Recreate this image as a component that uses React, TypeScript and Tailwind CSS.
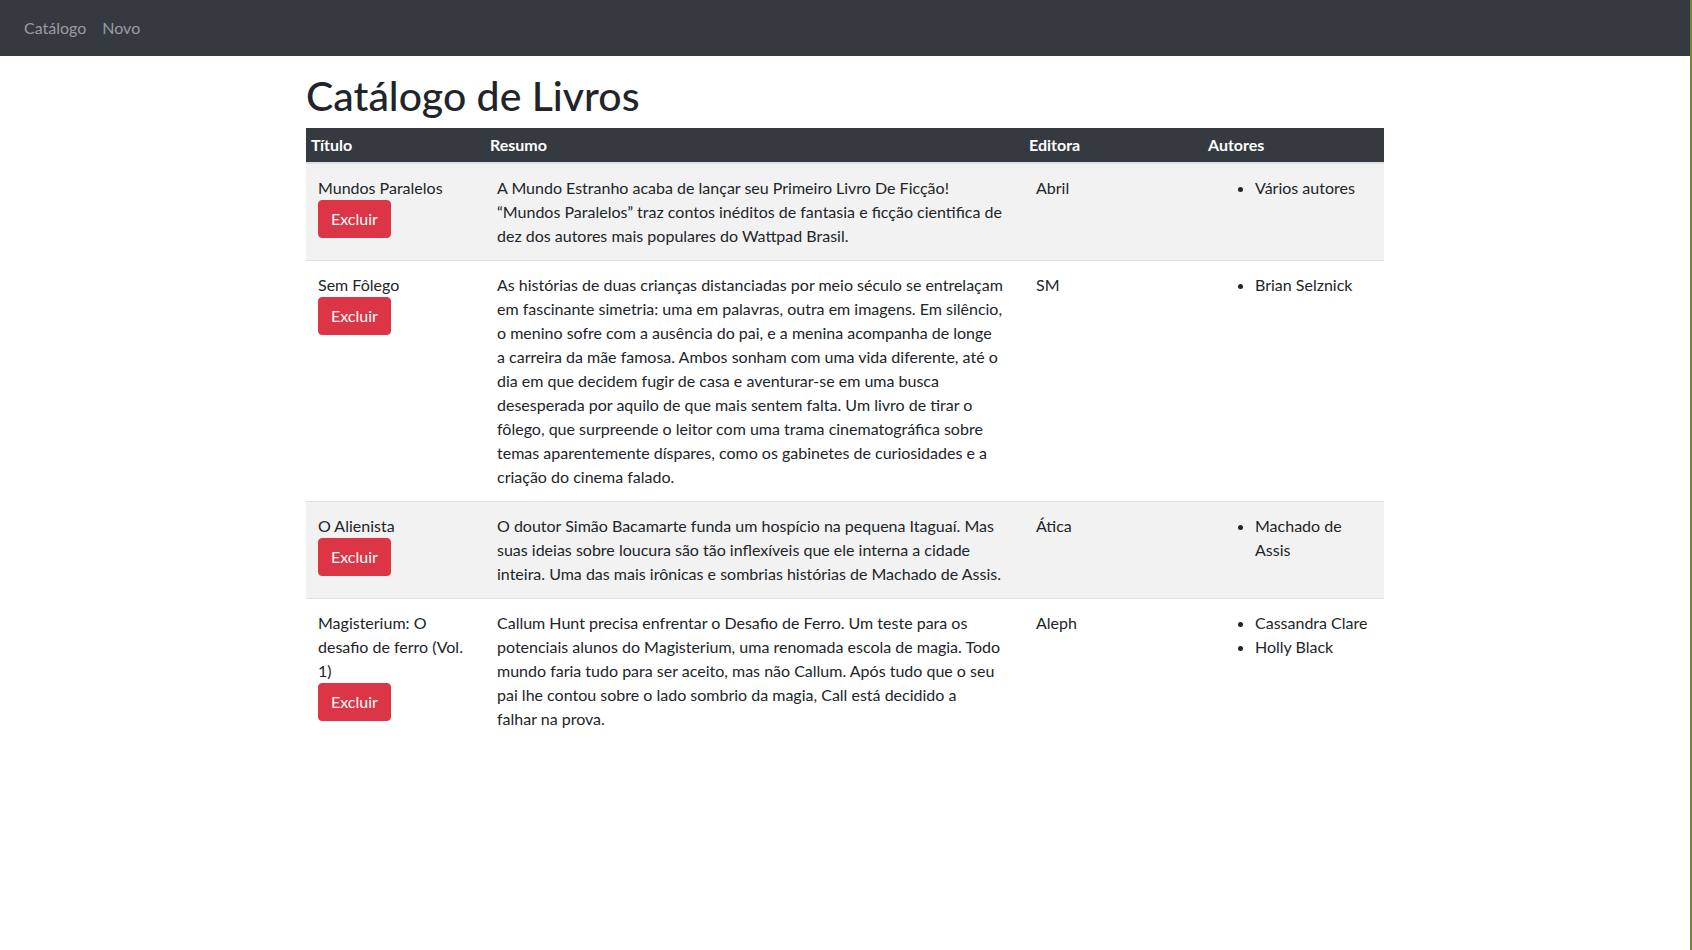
import React from 'react';

type Livro = {
  titulo: string[];
  resumo: string[];
  editora: string;
  autores: string[][];
};

const livros: Livro[] = [
  {
    titulo: ['Mundos Paralelos'],
    resumo: [
      'A Mundo Estranho acaba de lançar seu Primeiro Livro De Ficção!',
      '“Mundos Paralelos” traz contos inéditos de fantasia e ficção cientifica de',
      'dez dos autores mais populares do Wattpad Brasil.',
    ],
    editora: 'Abril',
    autores: [['Vários autores']],
  },
  {
    titulo: ['Sem Fôlego'],
    resumo: [
      'As histórias de duas crianças distanciadas por meio século se entrelaçam',
      'em fascinante simetria: uma em palavras, outra em imagens. Em silêncio,',
      'o menino sofre com a ausência do pai, e a menina acompanha de longe',
      'a carreira da mãe famosa. Ambos sonham com uma vida diferente, até o',
      'dia em que decidem fugir de casa e aventurar-se em uma busca',
      'desesperada por aquilo de que mais sentem falta. Um livro de tirar o',
      'fôlego, que surpreende o leitor com uma trama cinematográfica sobre',
      'temas aparentemente díspares, como os gabinetes de curiosidades e a',
      'criação do cinema falado.',
    ],
    editora: 'SM',
    autores: [['Brian Selznick']],
  },
  {
    titulo: ['O Alienista'],
    resumo: [
      'O doutor Simão Bacamarte funda um hospício na pequena Itaguaí. Mas',
      'suas ideias sobre loucura são tão inflexíveis que ele interna a cidade',
      'inteira. Uma das mais irônicas e sombrias histórias de Machado de Assis.',
    ],
    editora: 'Ática',
    autores: [['Machado de', 'Assis']],
  },
  {
    titulo: ['Magisterium: O', 'desafio de ferro (Vol.', '1)'],
    resumo: [
      'Callum Hunt precisa enfrentar o Desafio de Ferro. Um teste para os',
      'potenciais alunos do Magisterium, uma renomada escola de magia. Todo',
      'mundo faria tudo para ser aceito, mas não Callum. Após tudo que o seu',
      'pai lhe contou sobre o lado sombrio da magia, Call está decidido a',
      'falhar na prova.',
    ],
    editora: 'Aleph',
    autores: [['Cassandra Clare'], ['Holly Black']],
  },
];

// keeps the line breaks of the original layout
const Lines = ({ lines }: { lines: string[] }) => (
  <>
    {lines.map((l, i) => (
      <span key={i} className="block whitespace-nowrap">
        {l}
      </span>
    ))}
  </>
);

export default function App() {
  return (
    <div className="flex min-h-[950px] w-full bg-white font-['Lato','Noto_Sans',sans-serif] text-[16px] leading-6 text-[#212529]">
      <div className="flex-1">
        {/* Navbar */}
        <nav className="flex h-14 items-center bg-[#343a40] px-4">
          <a href="#" className="px-2 text-[#9a9da0]">Catálogo</a>
          <a href="#" className="px-2 text-[#9a9da0]">Novo</a>
        </nav>

        <div className="mx-auto w-[1078px] pt-4">
          <h1 className="mb-2 text-[41px] font-medium leading-[48px]">Catálogo de Livros</h1>

          <table className="w-full table-fixed border-collapse">
            <colgroup>
              <col className="w-[179px]" />
              <col className="w-[539px]" />
              <col className="w-[179px]" />
              <col className="w-[181px]" />
            </colgroup>
            <thead>
              <tr className="border-b-2 border-[#dee2e6] bg-[#343a40] text-left text-white">
                <th className="px-[5px] py-[5px] font-bold">Título</th>
                <th className="px-[5px] py-[5px] font-bold">Resumo</th>
                <th className="px-[5px] py-[5px] font-bold">Editora</th>
                <th className="px-[5px] py-[5px] font-bold">Autores</th>
              </tr>
            </thead>
            <tbody>
              {livros.map((livro, i) => (
                <tr
                  key={i}
                  className={`border-t border-[#dee2e6] align-top ${i % 2 === 0 ? 'bg-[#f2f2f2]' : 'bg-white'}`}
                >
                  <td className="p-3">
                    <Lines lines={livro.titulo} />
                    <button className="rounded border border-[#dc3545] bg-[#dc3545] px-3 py-1.5 leading-6 text-white">
                      Excluir
                    </button>
                  </td>
                  <td className="p-3">
                    <Lines lines={livro.resumo} />
                  </td>
                  <td className="p-3">{livro.editora}</td>
                  <td className="p-3">
                    <ul className="list-disc pl-10">
                      {livro.autores.map((a, j) => (
                        <li key={j}>
                          <Lines lines={a} />
                        </li>
                      ))}
                    </ul>
                  </td>
                </tr>
              ))}
            </tbody>
          </table>
        </div>
      </div>
      <div className="w-[2px] bg-[#76832f]" />
    </div>
  );
}
